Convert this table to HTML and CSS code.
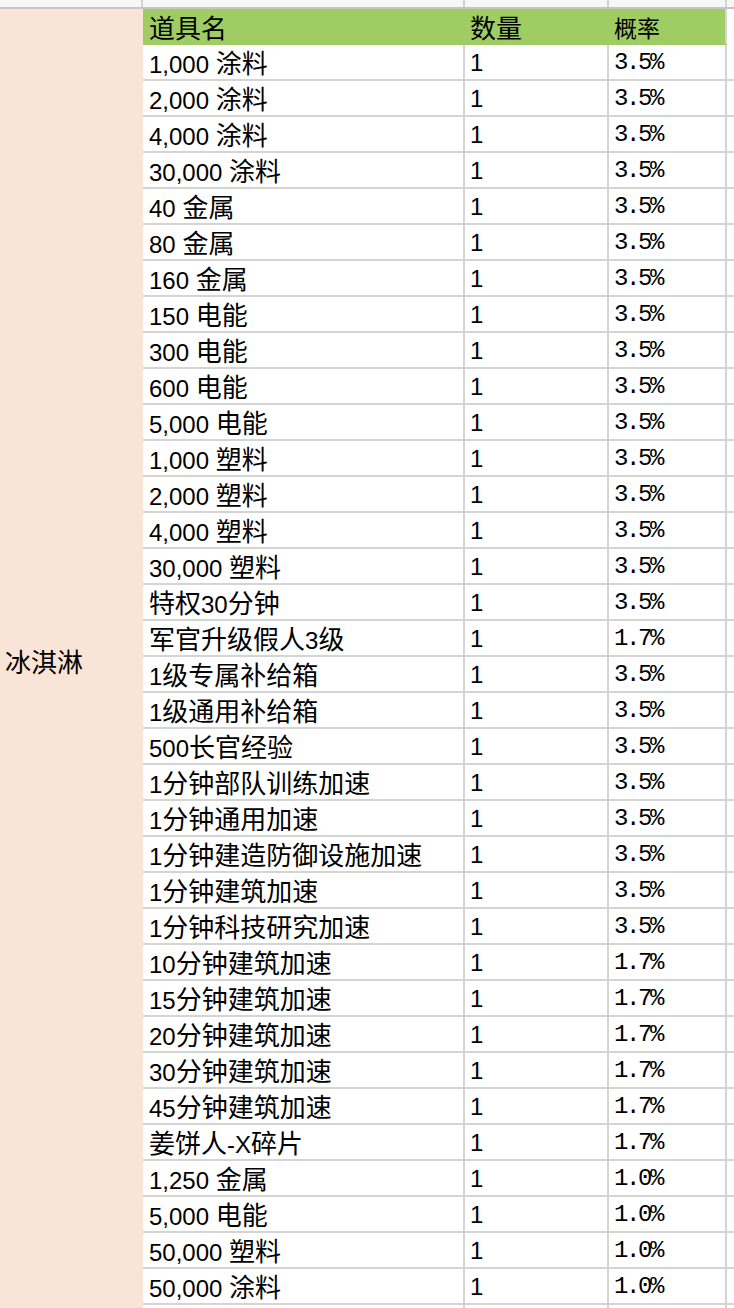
FILE: index.html
```html
<!DOCTYPE html>
<html lang="zh">
<head>
<meta charset="utf-8">
<title>道具概率</title>
<link rel="stylesheet" href="styles.css">
</head>
<body>
<div class="sheet">
  <div class="toprow">
    <div class="tc tc-cat"></div>
    <div class="tc tc-name"></div>
    <div class="tc tc-qty"></div>
    <div class="tc tc-rate"></div>
    <div class="tc tc-extra"></div>
  </div>
  <div class="main">
    <div class="cat">冰淇淋</div>
    <div class="table">
      <div class="row head">
        <div class="c name"><span class="cj">道具名</span></div>
        <div class="c qty"><span class="cj">数量</span></div>
        <div class="c rate">概率</div>
        <div class="c extra"></div>
      </div>
      <div class="row"><div class="c name"><span>1,000 <span class="cj">涂料</span></span></div><div class="c qty">1</div><div class="c rate">3.5%</div><div class="c extra"></div></div>
      <div class="row"><div class="c name"><span>2,000 <span class="cj">涂料</span></span></div><div class="c qty">1</div><div class="c rate">3.5%</div><div class="c extra"></div></div>
      <div class="row"><div class="c name"><span>4,000 <span class="cj">涂料</span></span></div><div class="c qty">1</div><div class="c rate">3.5%</div><div class="c extra"></div></div>
      <div class="row"><div class="c name"><span>30,000 <span class="cj">涂料</span></span></div><div class="c qty">1</div><div class="c rate">3.5%</div><div class="c extra"></div></div>
      <div class="row"><div class="c name"><span>40 <span class="cj">金属</span></span></div><div class="c qty">1</div><div class="c rate">3.5%</div><div class="c extra"></div></div>
      <div class="row"><div class="c name"><span>80 <span class="cj">金属</span></span></div><div class="c qty">1</div><div class="c rate">3.5%</div><div class="c extra"></div></div>
      <div class="row"><div class="c name"><span>160 <span class="cj">金属</span></span></div><div class="c qty">1</div><div class="c rate">3.5%</div><div class="c extra"></div></div>
      <div class="row"><div class="c name"><span>150 <span class="cj">电能</span></span></div><div class="c qty">1</div><div class="c rate">3.5%</div><div class="c extra"></div></div>
      <div class="row"><div class="c name"><span>300 <span class="cj">电能</span></span></div><div class="c qty">1</div><div class="c rate">3.5%</div><div class="c extra"></div></div>
      <div class="row"><div class="c name"><span>600 <span class="cj">电能</span></span></div><div class="c qty">1</div><div class="c rate">3.5%</div><div class="c extra"></div></div>
      <div class="row"><div class="c name"><span>5,000 <span class="cj">电能</span></span></div><div class="c qty">1</div><div class="c rate">3.5%</div><div class="c extra"></div></div>
      <div class="row"><div class="c name"><span>1,000 <span class="cj">塑料</span></span></div><div class="c qty">1</div><div class="c rate">3.5%</div><div class="c extra"></div></div>
      <div class="row"><div class="c name"><span>2,000 <span class="cj">塑料</span></span></div><div class="c qty">1</div><div class="c rate">3.5%</div><div class="c extra"></div></div>
      <div class="row"><div class="c name"><span>4,000 <span class="cj">塑料</span></span></div><div class="c qty">1</div><div class="c rate">3.5%</div><div class="c extra"></div></div>
      <div class="row"><div class="c name"><span>30,000 <span class="cj">塑料</span></span></div><div class="c qty">1</div><div class="c rate">3.5%</div><div class="c extra"></div></div>
      <div class="row"><div class="c name"><span><span class="cj">特权</span>30<span class="cj">分钟</span></span></div><div class="c qty">1</div><div class="c rate">3.5%</div><div class="c extra"></div></div>
      <div class="row"><div class="c name"><span><span class="cj">军官升级假人</span>3<span class="cj">级</span></span></div><div class="c qty">1</div><div class="c rate">1.7%</div><div class="c extra"></div></div>
      <div class="row"><div class="c name"><span>1<span class="cj">级专属补给箱</span></span></div><div class="c qty">1</div><div class="c rate">3.5%</div><div class="c extra"></div></div>
      <div class="row"><div class="c name"><span>1<span class="cj">级通用补给箱</span></span></div><div class="c qty">1</div><div class="c rate">3.5%</div><div class="c extra"></div></div>
      <div class="row"><div class="c name"><span>500<span class="cj">长官经验</span></span></div><div class="c qty">1</div><div class="c rate">3.5%</div><div class="c extra"></div></div>
      <div class="row"><div class="c name"><span>1<span class="cj">分钟部队训练加速</span></span></div><div class="c qty">1</div><div class="c rate">3.5%</div><div class="c extra"></div></div>
      <div class="row"><div class="c name"><span>1<span class="cj">分钟通用加速</span></span></div><div class="c qty">1</div><div class="c rate">3.5%</div><div class="c extra"></div></div>
      <div class="row"><div class="c name"><span>1<span class="cj">分钟建造防御设施加速</span></span></div><div class="c qty">1</div><div class="c rate">3.5%</div><div class="c extra"></div></div>
      <div class="row"><div class="c name"><span>1<span class="cj">分钟建筑加速</span></span></div><div class="c qty">1</div><div class="c rate">3.5%</div><div class="c extra"></div></div>
      <div class="row"><div class="c name"><span>1<span class="cj">分钟科技研究加速</span></span></div><div class="c qty">1</div><div class="c rate">3.5%</div><div class="c extra"></div></div>
      <div class="row"><div class="c name"><span>10<span class="cj">分钟建筑加速</span></span></div><div class="c qty">1</div><div class="c rate">1.7%</div><div class="c extra"></div></div>
      <div class="row"><div class="c name"><span>15<span class="cj">分钟建筑加速</span></span></div><div class="c qty">1</div><div class="c rate">1.7%</div><div class="c extra"></div></div>
      <div class="row"><div class="c name"><span>20<span class="cj">分钟建筑加速</span></span></div><div class="c qty">1</div><div class="c rate">1.7%</div><div class="c extra"></div></div>
      <div class="row"><div class="c name"><span>30<span class="cj">分钟建筑加速</span></span></div><div class="c qty">1</div><div class="c rate">1.7%</div><div class="c extra"></div></div>
      <div class="row"><div class="c name"><span>45<span class="cj">分钟建筑加速</span></span></div><div class="c qty">1</div><div class="c rate">1.7%</div><div class="c extra"></div></div>
      <div class="row"><div class="c name"><span><span class="cj">姜饼人</span>-X<span class="cj">碎片</span></span></div><div class="c qty">1</div><div class="c rate">1.7%</div><div class="c extra"></div></div>
      <div class="row"><div class="c name"><span>1,250 <span class="cj">金属</span></span></div><div class="c qty">1</div><div class="c rate">1.0%</div><div class="c extra"></div></div>
      <div class="row"><div class="c name"><span>5,000 <span class="cj">电能</span></span></div><div class="c qty">1</div><div class="c rate">1.0%</div><div class="c extra"></div></div>
      <div class="row"><div class="c name"><span>50,000 <span class="cj">塑料</span></span></div><div class="c qty">1</div><div class="c rate">1.0%</div><div class="c extra"></div></div>
      <div class="row"><div class="c name"><span>50,000 <span class="cj">涂料</span></span></div><div class="c qty">1</div><div class="c rate">1.0%</div><div class="c extra"></div></div>
      <div class="row tail"><div class="c name"></div><div class="c qty"></div><div class="c rate"></div><div class="c extra"></div></div>
    </div>
  </div>
</div>
</body>
</html>
```
FILE: styles.css
```css
html, body {
  margin: 0;
  padding: 0;
  background: #ffffff;
}
body {
  font-family: "Liberation Sans", "Noto Sans CJK SC", sans-serif;
  font-size: 24px;
  color: #000000;
  width: 734px;
  height: 1308px;
  overflow: hidden;
}
.sheet {
  width: 734px;
}
.toprow {
  display: grid;
  grid-template-columns: 143px 322px 144px 118px 1fr;
  height: 7px;
  border-bottom: 2px solid #c6c6c6;
  background: #f7f7f7;
}
.tc {
  border-right: 2px solid #d4d4d4;
}
.tc-extra {
  border-right: none;
}
.main {
  display: flex;
}
.cat {
  width: 143px;
  flex: none;
  background: #f9e5d7;
  display: flex;
  align-items: center;
  padding-left: 5px;
  padding-bottom: 4px;
  box-sizing: border-box;
  font-family: "Noto Sans CJK SC", sans-serif;
  font-size: 26px;
}
.table {
  flex: 1;
}
.row {
  display: grid;
  grid-template-columns: 322px 144px 118px 1fr;
  height: 36px;
}
.c {
  display: flex;
  align-items: center;
  padding-top: 2px;
  border-right: 2px solid #d4d4d4;
  border-bottom: 2px solid #d4d4d4;
  box-sizing: border-box;
  white-space: nowrap;
  line-height: 1;
}
.c.extra {
  border-right: none;
}
.cj {
  font-family: "Noto Sans CJK SC", sans-serif;
  font-size: 26px;
}
.name {
  padding-left: 6px;
}
.qty {
  padding-left: 5px;
}
.rate {
  padding-left: 5px;
  font-family: "Liberation Mono", "Noto Sans CJK SC", monospace;
  letter-spacing: -2.4px;
}
.head .c {
  background: #9fcd63;
  border-bottom-color: #9fcd63;
  border-right-color: #9fcd63;
}
.head .c.rate {
  border-right-color: #d4d4d4;
  font-family: "Noto Sans CJK SC", sans-serif;
  font-size: 23px;
  letter-spacing: 0;
}
.head .c.extra {
  background: #ffffff;
  border-bottom-color: #ffffff;
}
.tail {
  height: 10px;
}
```
